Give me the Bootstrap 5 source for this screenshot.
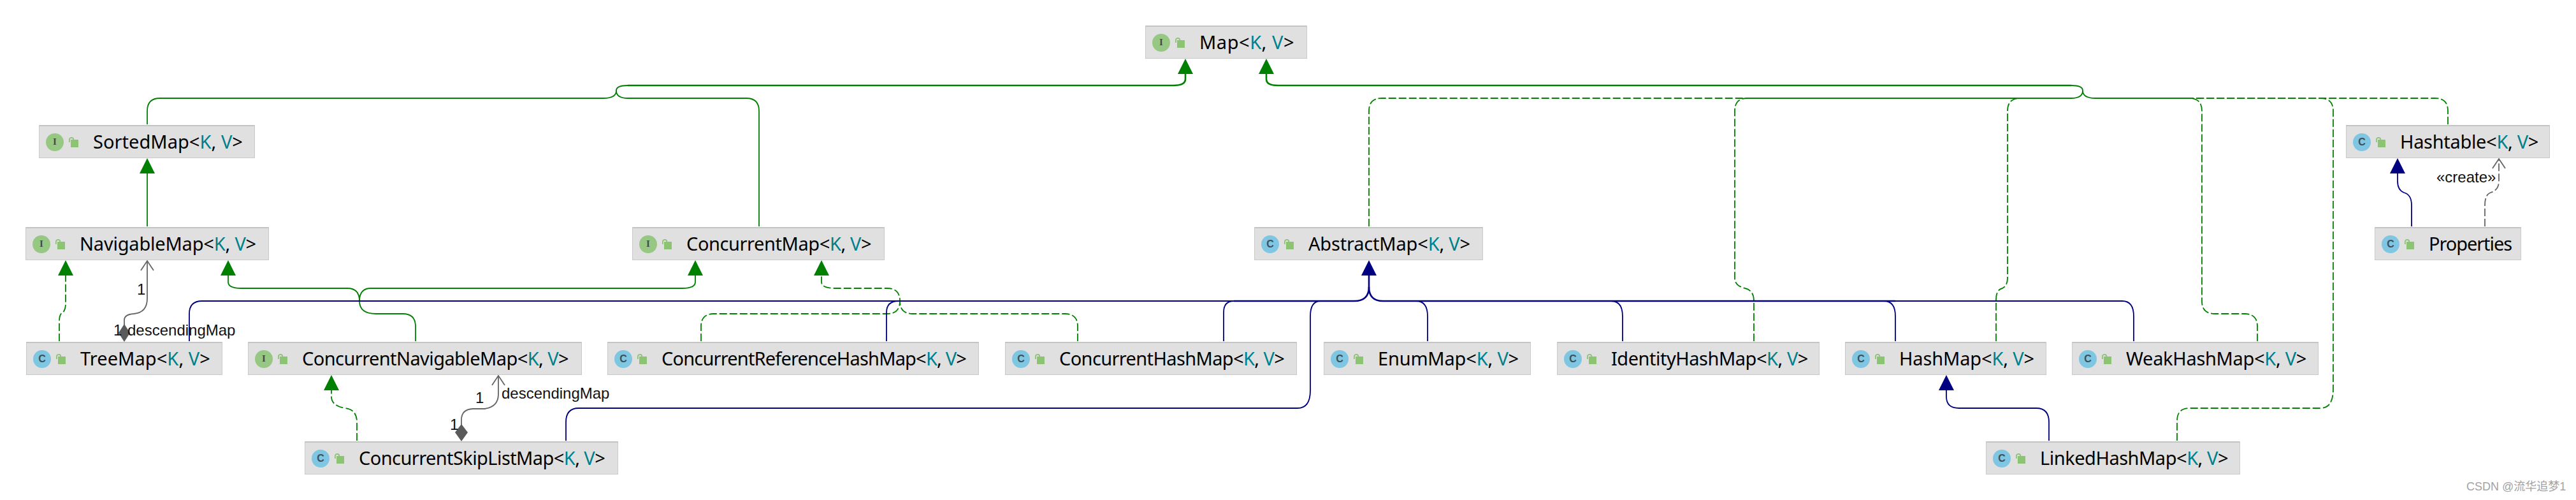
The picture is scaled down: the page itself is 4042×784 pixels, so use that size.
<!DOCTYPE html>
<html lang="en">
<head>
<meta charset="utf-8">
<title>Map hierarchy</title>
<link rel="stylesheet" href="https://cdn.jsdelivr.net/npm/bootstrap@5.3.0/dist/css/bootstrap.min.css">
<style>
html,body{margin:0;background:#fff;overflow:hidden}
.uml-canvas{width:4042px;height:784px;background:#fff}
.uml-edges{left:0;top:0;width:4042px;height:784px}
.uml-edges path{fill:none;stroke-width:1.8}
.uml-edges path.e-bus{stroke-width:2.6}
.e-green{stroke:#008000}
.e-blue{stroke:#000080}
.e-gray{stroke:#646464}
.e-dash{stroke-dasharray:12 4}
.h-green{fill:#008000 !important;stroke:none !important}
.h-blue{fill:#000080 !important;stroke:none !important}
.h-gray{fill:#5a5a5a !important;stroke:none !important}
.uml-node{height:52px;background:#e0e0e0;border:1px solid #c9c9c9;border-top:2px solid #c4c4c4;padding-left:10px;white-space:nowrap}
.kind-badge{width:28px;height:28px;flex:none;font:bold 15px "Liberation Serif",serif;color:#43484c}
.kind-i{background:#97c883}
.kind-c{background:#7fc6e3;font:bold 16px "Liberation Sans",sans-serif;color:#3e4e5a}
.lock-ic{width:15px;height:16px;flex:none;margin-left:8px;margin-right:23px}
.node-label{font:29px/1 "Noto Sans",sans-serif;color:#000;padding-bottom:2px}
.tparam{color:#00808c}
.edge-text{position:absolute;font:24px/1 "Liberation Sans",sans-serif;color:#111;white-space:nowrap}
.wm-text{position:absolute;left:3870px;top:754px;font:18px/1.1 "Liberation Sans","Noto Sans CJK SC",sans-serif;color:#a3a3a3;white-space:nowrap}
</style>
</head>
<body>
<div class="uml-canvas position-relative">
<svg class="uml-edges position-absolute" viewBox="0 0 4042 784" xmlns="http://www.w3.org/2000/svg">
  <defs>
    <symbol id="lockglyph" viewBox="0 0 15 16">
      <rect x="3" y="4" width="12" height="12" fill="#8cc474"/>
      <path d="M.9 8V4a3.2 3.2 0 0 1 6.4 0" fill="none" stroke="#8cc474" stroke-width="1.6"/>
    </symbol>
  </defs>
  <!-- to Map, solid -->
  <path class="e-green e-bus" d="M985 134H1841Q1860 134 1860 124V116"/>
  <path class="e-green" d="M231 195V174Q231 154 251 154H947Q967 154 967 142Q967 134 985 134"/>
  <path class="e-green" d="M1191 355V174Q1191 154 1171 154H985Q967 154 967 142"/>
  <!-- to Map, realisations -->
  <path class="e-green e-bus" d="M3250 134H2005Q1987 134 1987 124V116"/>
  <path class="e-green" d="M2742 154H3250Q3268 154 3268 142Q3268 134 3250 134"/>
  <path class="e-green" d="M3288 154H3435M3288 154Q3268 154 3268 142"/>
  <path class="e-green e-dash" d="M2148 355V174Q2148 154 2168 154H3250"/>
  <path class="e-green e-dash" d="M2752 535V472Q2752 455 2738 452Q2722 448 2722 436V174Q2722 154 2742 154"/>
  <path class="e-green e-dash" d="M3132 535V470Q3132 454 3142 452Q3150 448 3150 436V174Q3150 154 3170 154"/>
  <path class="e-green e-dash" d="M3542 535V512Q3542 492 3522 492H3475Q3455 492 3455 472V174Q3455 154 3435 154"/>
  <path class="e-green e-dash" d="M3416 691V660Q3416 640 3436 640H3641Q3661 640 3661 610V174Q3661 154 3641 154H3435"/>
  <path class="e-green e-dash" d="M3841 195V174Q3841 154 3821 154H3435"/>
  <polygon class="h-green" points="1860,92 1848,116 1872,116"/>
  <polygon class="h-green" points="1987,92 1975,116 1999,116"/>
  <!-- SortedMap -->
  <path class="e-green" d="M231 355V270"/>
  <polygon class="h-green" points="231,248 219,272 243,272"/>
  <!-- NavigableMap / ConcurrentMap from ConcurrentNavigableMap -->
  <path class="e-green" d="M652 535V512Q652 492 632 492H590Q564 492 564 472Q564 452 545 452H378Q358 452 358 442V432"/>
  <path class="e-green" d="M564 472Q564 452 582 452H1071Q1091 452 1091 442V432"/>
  <polygon class="h-green" points="358,408 346,432 370,432"/>
  <polygon class="h-green" points="1091,408 1079,432 1103,432"/>
  <!-- ConcurrentMap realisations -->
  <path class="e-green e-dash" d="M1100 535V512Q1100 492 1120 492H1392Q1412 492 1412 472Q1412 452 1392 452H1310Q1289 452 1289 442V432"/>
  <path class="e-green e-dash" d="M1691 535V512Q1691 492 1671 492H1432Q1412 492 1412 472"/>
  <polygon class="h-green" points="1289,408 1277,432 1301,432"/>
  <!-- TreeMap realisation -->
  <path class="e-green e-dash" d="M93 535V504Q93 493 98 490Q103 487 103 475V432"/>
  <polygon class="h-green" points="103,408 91,432 115,432"/>
  <!-- SkipList realisation -->
  <path class="e-green e-dash" d="M560 691V662Q560 642 541 640Q520 636 520 622V612"/>
  <polygon class="h-green" points="520,588 508,612 532,612"/>
  <!-- to AbstractMap -->
  <path class="e-blue" d="M297 535V492Q297 472 317 472H1936"/>
  <path class="e-blue e-bus" d="M1936 472H2125Q2148 472 2148 450V432"/>
  <path class="e-blue" d="M1391 535V490Q1391 472 1410 472"/>
  <path class="e-blue" d="M1920 535V490Q1920 472 1936 472"/>
  <path class="e-blue" d="M888 691V662Q888 640 908 640H2036Q2056 640 2056 612V496Q2056 472 2072 472"/>
  <path class="e-blue" d="M2240 535V496Q2240 472 2222 472"/>
  <path class="e-blue" d="M2546 535V496Q2546 472 2528 472"/>
  <path class="e-blue" d="M2974 535V496Q2974 472 2956 472"/>
  <path class="e-blue" d="M3348 535V496Q3348 472 3330 472H2974"/>
  <path class="e-blue e-bus" d="M2974 472H2170Q2148 472 2148 450"/>
  <polygon class="h-blue" points="2148,408 2136,432 2160,432"/>
  <!-- to HashMap -->
  <path class="e-blue" d="M3215 691V662Q3215 640 3195 640H3074Q3054 640 3054 622V612"/>
  <polygon class="h-blue" points="3054,588 3042,612 3066,612"/>
  <!-- to Hashtable -->
  <path class="e-blue" d="M3784 355V322Q3784 305 3772 302Q3762 298 3762 284V272"/>
  <polygon class="h-blue" points="3762,248 3750,272 3774,272"/>
  <path class="e-gray e-dash" d="M3899 355V322Q3899 305 3908 302Q3921 298 3921 284V250"/>
  <path class="e-gray" d="M3911 264L3921 249L3931 264"/>
  <!-- descendingMap associations -->
  <path class="e-gray" d="M195 510V502Q195 493 210 492Q231 490 231 468V410"/>
  <path class="e-gray" d="M221 424L231 409L241 424"/>
  <polygon class="h-gray" points="195,508 204,522 195,536 186,522"/>
  <path class="e-gray" d="M724 667V658Q724 642 742 641H760Q782 638 782 618V590"/>
  <path class="e-gray" d="M772 604L782 589L792 604"/>
  <polygon class="h-gray" points="724,665 734,678 724,692 714,678"/>
</svg>

<span class="edge-text" style="left:215px;top:442px">1</span>
<span class="edge-text" style="left:178px;top:506px">1</span>
<span class="edge-text" style="left:200px;top:506px">descendingMap</span>
<span class="edge-text" style="left:746px;top:612px">1</span>
<span class="edge-text" style="left:706px;top:654px">1</span>
<span class="edge-text" style="left:787px;top:605px">descendingMap</span>
<span class="edge-text" style="left:3823px;top:266px">«create»</span>

<div class="uml-node position-absolute d-flex align-items-center" style="left:1797px;top:40px;width:254px"><span class="kind-badge kind-i rounded-circle d-flex align-items-center justify-content-center">I</span><svg class="lock-ic"><use href="#lockglyph"/></svg><span class="node-label" style="letter-spacing:.53px">Map&lt;<span class="tparam">K</span>, <span class="tparam">V</span>&gt;</span></div>
<div class="uml-node position-absolute d-flex align-items-center" style="left:61px;top:196px;width:339px"><span class="kind-badge kind-i rounded-circle d-flex align-items-center justify-content-center">I</span><svg class="lock-ic"><use href="#lockglyph"/></svg><span class="node-label" style="letter-spacing:.04px">SortedMap&lt;<span class="tparam">K</span>, <span class="tparam">V</span>&gt;</span></div>
<div class="uml-node position-absolute d-flex align-items-center" style="left:3681px;top:196px;width:320px"><span class="kind-badge kind-c rounded-circle d-flex align-items-center justify-content-center">C</span><svg class="lock-ic"><use href="#lockglyph"/></svg><span class="node-label" style="letter-spacing:-.32px">Hashtable&lt;<span class="tparam">K</span>, <span class="tparam">V</span>&gt;</span></div>
<div class="uml-node position-absolute d-flex align-items-center" style="left:40px;top:356px;width:382px"><span class="kind-badge kind-i rounded-circle d-flex align-items-center justify-content-center">I</span><svg class="lock-ic"><use href="#lockglyph"/></svg><span class="node-label" style="letter-spacing:-.2px">NavigableMap&lt;<span class="tparam">K</span>, <span class="tparam">V</span>&gt;</span></div>
<div class="uml-node position-absolute d-flex align-items-center" style="left:992px;top:356px;width:396px"><span class="kind-badge kind-i rounded-circle d-flex align-items-center justify-content-center">I</span><svg class="lock-ic"><use href="#lockglyph"/></svg><span class="node-label" style="letter-spacing:-.42px">ConcurrentMap&lt;<span class="tparam">K</span>, <span class="tparam">V</span>&gt;</span></div>
<div class="uml-node position-absolute d-flex align-items-center" style="left:1968px;top:356px;width:359px"><span class="kind-badge kind-c rounded-circle d-flex align-items-center justify-content-center">C</span><svg class="lock-ic"><use href="#lockglyph"/></svg><span class="node-label" style="letter-spacing:-.18px">AbstractMap&lt;<span class="tparam">K</span>, <span class="tparam">V</span>&gt;</span></div>
<div class="uml-node position-absolute d-flex align-items-center" style="left:3726px;top:356px;width:230px"><span class="kind-badge kind-c rounded-circle d-flex align-items-center justify-content-center">C</span><svg class="lock-ic"><use href="#lockglyph"/></svg><span class="node-label" style="letter-spacing:-1.09px">Properties</span></div>
<div class="uml-node position-absolute d-flex align-items-center" style="left:41px;top:536px;width:308px"><span class="kind-badge kind-c rounded-circle d-flex align-items-center justify-content-center">C</span><svg class="lock-ic"><use href="#lockglyph"/></svg><span class="node-label" style="letter-spacing:.07px">TreeMap&lt;<span class="tparam">K</span>, <span class="tparam">V</span>&gt;</span></div>
<div class="uml-node position-absolute d-flex align-items-center" style="left:389px;top:536px;width:524px"><span class="kind-badge kind-i rounded-circle d-flex align-items-center justify-content-center">I</span><svg class="lock-ic"><use href="#lockglyph"/></svg><span class="node-label" style="letter-spacing:-.58px">ConcurrentNavigableMap&lt;<span class="tparam">K</span>, <span class="tparam">V</span>&gt;</span></div>
<div class="uml-node position-absolute d-flex align-items-center" style="left:953px;top:536px;width:583px"><span class="kind-badge kind-c rounded-circle d-flex align-items-center justify-content-center">C</span><svg class="lock-ic"><use href="#lockglyph"/></svg><span class="node-label" style="letter-spacing:-.82px">ConcurrentReferenceHashMap&lt;<span class="tparam">K</span>, <span class="tparam">V</span>&gt;</span></div>
<div class="uml-node position-absolute d-flex align-items-center" style="left:1577px;top:536px;width:458px"><span class="kind-badge kind-c rounded-circle d-flex align-items-center justify-content-center">C</span><svg class="lock-ic"><use href="#lockglyph"/></svg><span class="node-label" style="letter-spacing:-.63px">ConcurrentHashMap&lt;<span class="tparam">K</span>, <span class="tparam">V</span>&gt;</span></div>
<div class="uml-node position-absolute d-flex align-items-center" style="left:2077px;top:536px;width:325px"><span class="kind-badge kind-c rounded-circle d-flex align-items-center justify-content-center">C</span><svg class="lock-ic"><use href="#lockglyph"/></svg><span class="node-label" style="letter-spacing:-.18px">EnumMap&lt;<span class="tparam">K</span>, <span class="tparam">V</span>&gt;</span></div>
<div class="uml-node position-absolute d-flex align-items-center" style="left:2443px;top:536px;width:412px"><span class="kind-badge kind-c rounded-circle d-flex align-items-center justify-content-center">C</span><svg class="lock-ic"><use href="#lockglyph"/></svg><span class="node-label" style="letter-spacing:-.48px">IdentityHashMap&lt;<span class="tparam">K</span>, <span class="tparam">V</span>&gt;</span></div>
<div class="uml-node position-absolute d-flex align-items-center" style="left:2895px;top:536px;width:316px"><span class="kind-badge kind-c rounded-circle d-flex align-items-center justify-content-center">C</span><svg class="lock-ic"><use href="#lockglyph"/></svg><span class="node-label" style="letter-spacing:-.14px">HashMap&lt;<span class="tparam">K</span>, <span class="tparam">V</span>&gt;</span></div>
<div class="uml-node position-absolute d-flex align-items-center" style="left:3251px;top:536px;width:387px"><span class="kind-badge kind-c rounded-circle d-flex align-items-center justify-content-center">C</span><svg class="lock-ic"><use href="#lockglyph"/></svg><span class="node-label" style="letter-spacing:-.31px">WeakHashMap&lt;<span class="tparam">K</span>, <span class="tparam">V</span>&gt;</span></div>
<div class="uml-node position-absolute d-flex align-items-center" style="left:478px;top:692px;width:492px"><span class="kind-badge kind-c rounded-circle d-flex align-items-center justify-content-center">C</span><svg class="lock-ic"><use href="#lockglyph"/></svg><span class="node-label" style="letter-spacing:-.58px">ConcurrentSkipListMap&lt;<span class="tparam">K</span>, <span class="tparam">V</span>&gt;</span></div>
<div class="uml-node position-absolute d-flex align-items-center" style="left:3116px;top:692px;width:399px"><span class="kind-badge kind-c rounded-circle d-flex align-items-center justify-content-center">C</span><svg class="lock-ic"><use href="#lockglyph"/></svg><span class="node-label" style="letter-spacing:-.48px">LinkedHashMap&lt;<span class="tparam">K</span>, <span class="tparam">V</span>&gt;</span></div>

<span class="wm-text">CSDN @流华追梦1</span>
</div>
<script src="https://cdn.jsdelivr.net/npm/bootstrap@5.3.0/dist/js/bootstrap.bundle.min.js"></script>
</body>
</html>
